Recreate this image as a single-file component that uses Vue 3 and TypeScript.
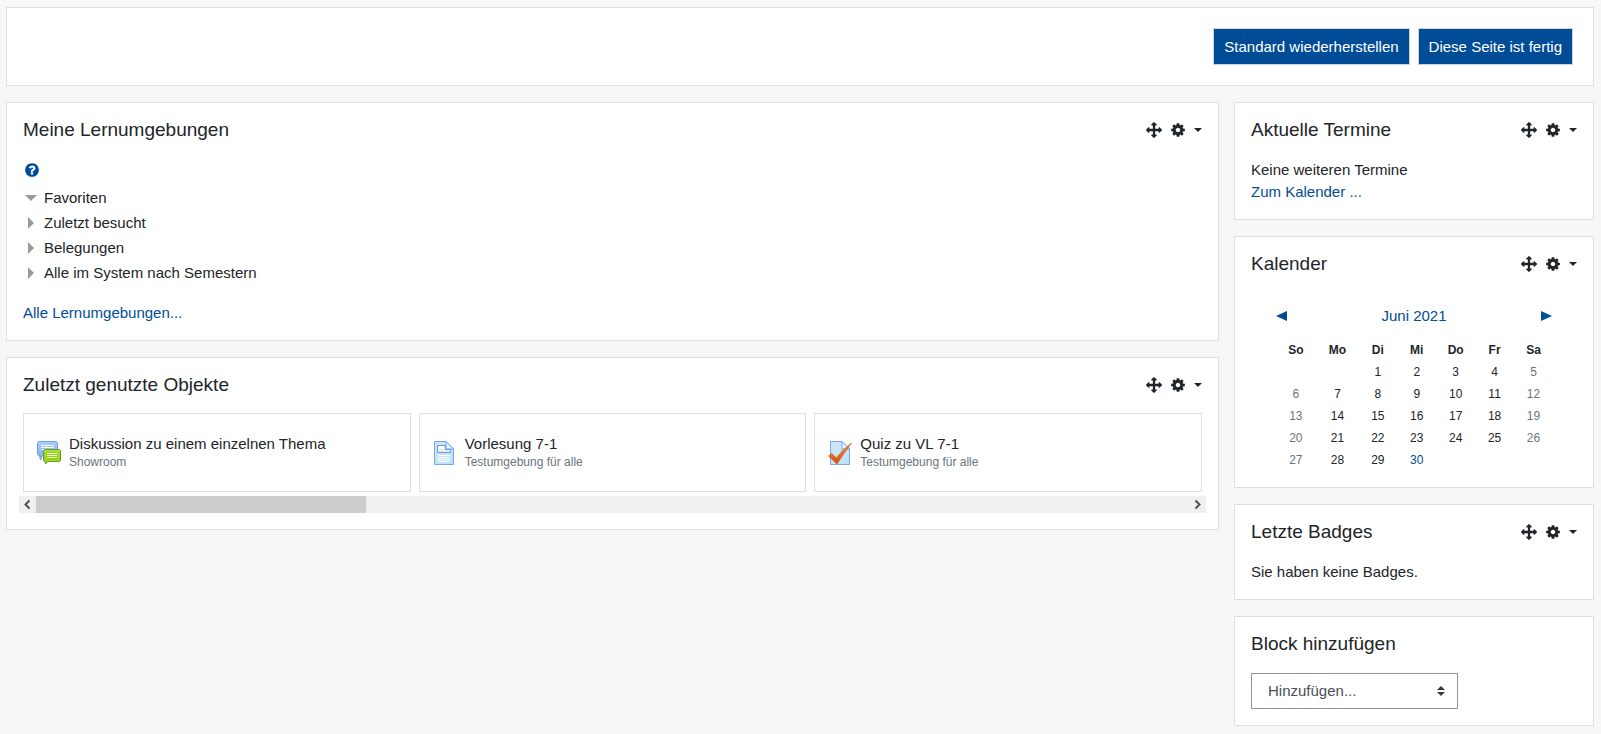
<script setup lang="ts">
import { ref } from 'vue'

interface RecentItem {
  kind: 'forum' | 'page' | 'quiz'
  title: string
  course: string
}

const sections = ref([
  { label: 'Favoriten', open: true },
  { label: 'Zuletzt besucht', open: false },
  { label: 'Belegungen', open: false },
  { label: 'Alle im System nach Semestern', open: false },
])

const recentItems: RecentItem[] = [
  { kind: 'forum', title: 'Diskussion zu einem einzelnen Thema', course: 'Showroom' },
  { kind: 'page', title: 'Vorlesung 7-1', course: 'Testumgebung für alle' },
  { kind: 'quiz', title: 'Quiz zu VL 7-1', course: 'Testumgebung für alle' },
]

const weekdays = ['So', 'Mo', 'Di', 'Mi', 'Do', 'Fr', 'Sa']
const firstWeekday = 2
const today = 30
const weeks: (number | null)[][] = Array.from({ length: 5 }, (_, w) =>
  Array.from({ length: 7 }, (_, d) => {
    const day = w * 7 + d - firstWeekday + 1
    return day >= 1 && day <= 30 ? day : null
  }),
)

const blockToAdd = ref('')
</script>

<template>
  <svg class="sprite" aria-hidden="true">
    <symbol id="i-move" viewBox="0 0 1792 1792">
      <path d="M1792 896q0 26-19 45l-256 256q-19 19-45 19t-45-19-19-45v-128h-384v384h128q26 0 45 19t19 45-19 45l-256 256q-19 19-45 19t-45-19l-256-256q-19-19-19-45t19-45 45-19h128v-384h-384v128q0 26-19 45t-45 19-45-19l-256-256q-19-19-19-45t19-45l256-256q19-19 45-19t45 19 19 45v128h384v-384h-128q-26 0-45-19t-19-45 19-45l256-256q19-19 45-19t45 19l256 256q19 19 19 45t-19 45-45 19h-128v384h384v-128q0-26 19-45t45-19 45 19l256 256q19 19 19 45z" />
    </symbol>
    <symbol id="i-cog" viewBox="0 0 1792 1792">
      <path d="M1152 896q0-106-75-181t-181-75-181 75-75 181 75 181 181 75 181-75 75-181zm512-109v222q0 12-8 23t-20 13l-185 28q-19 54-39 91 35 50 107 138 10 12 10 25t-9 23q-27 37-99 108t-94 71q-12 0-26-9l-138-108q-44 23-91 38-16 136-29 186-7 28-36 28h-222q-14 0-24.5-8.5t-11.5-21.5l-28-184q-49-16-90-37l-141 107q-10 9-25 9-14 0-25-11-126-114-165-168-7-10-7-23 0-12 8-23 15-21 51-66.5t54-70.5q-27-50-41-99l-183-27q-13-2-21-12.5t-8-23.5v-222q0-12 8-23t19-13l186-28q14-46 39-92-40-57-107-138-10-12-10-24 0-10 9-23 26-36 98.5-107.5t94.5-71.5q13 0 26 10l138 107q44-23 91-38 16-136 29-186 7-28 36-28h222q14 0 24.5 8.5t11.5 21.5l28 184q49 16 90 37l142-107q9-9 24-9 13 0 25 10 129 119 165 170 7 8 7 22 0 12-8 23-15 21-51 66.5t-54 70.5q26 50 41 98l183 28q13 2 21 12.5t8 23.5z" />
    </symbol>
    <symbol id="i-caret" viewBox="0 0 8 4">
      <path d="M0 0h8l-4 4z" />
    </symbol>
    <symbol id="i-help" viewBox="0 0 1792 1792">
      <path d="M1024 1376v-192q0-14-9-23t-23-9h-192q-14 0-23 9t-9 23v192q0 14 9 23t23 9h192q14 0 23-9t9-23zm256-672q0-88-55.5-163t-138.5-116-170-41q-243 0-371 213-15 24 8 42l132 100q7 6 19 6 16 0 25-12 53-68 86-92 34-24 86-24 48 0 85.5 26t37.5 59q0 38-20 61t-68 45q-63 28-115.5 86.5t-52.5 125.5v36q0 14 9 23t23 9h192q14 0 23-9t9-23q0-19 21.5-49.5t54.5-49.5q32-18 49-28.5t46-35 44.5-48 28-60.5 12.5-81zm384 192q0 209-103 385.5t-279.5 279.5-385.5 103-385.5-103-279.5-279.5-103-385.5 103-385.5 279.5-279.5 385.5-103 385.5 103 279.5 279.5 103 385.5z" />
    </symbol>
    <linearGradient id="g-blue" x1="0" y1="0" x2="0" y2="1">
      <stop offset="0" stop-color="#a9cdfb" />
      <stop offset="1" stop-color="#7aa9f0" />
    </linearGradient>
    <linearGradient id="g-green" x1="0" y1="0" x2="0" y2="1">
      <stop offset="0" stop-color="#a6dc1c" />
      <stop offset="1" stop-color="#86c408" />
    </linearGradient>
    <linearGradient id="g-paper" x1="0" y1="0" x2="1" y2="1">
      <stop offset="0" stop-color="#cfe8fa" />
      <stop offset="1" stop-color="#bcdff8" />
    </linearGradient>
    <linearGradient id="g-check" x1="0" y1="0" x2="0" y2="1">
      <stop offset="0" stop-color="#f59a3c" />
      <stop offset="1" stop-color="#d9480a" />
    </linearGradient>
    <symbol id="i-forum" viewBox="0 0 24 24">
      <path d="M1.500.5h18l1 1v12l-1 1H5.500L3.500 19l-1-4.500H1.500l-1-1v-12z" fill="url(#g-blue)" stroke="#6f9eea" />
      <path d="M4 4.500h13M4 6.500h13M4 8.500h9" stroke="#fff" />
      <path d="M7.500 8.500h15l1 1v10l-1 1h-12.500l-1.500 2.500-.5-2.500h-.5l-1-1v-10z" fill="url(#g-green)" stroke="#62a024" />
      <path d="M8.500 9.500h13v10h-13z" fill="none" stroke="#bde55a" stroke-opacity=".6" />
      <path d="M10 12.500h10M10 14.500h10M10 16.500h10" stroke="#f4fbd8" />
    </symbol>
    <symbol id="i-page" viewBox="0 0 24 24">
      <path d="M1.500.5h11.500l7.500 7.500v15.500h-19z" fill="url(#g-paper)" stroke="#79a7ef" />
      <path d="M13 .5v7.500h7.500z" fill="#e8f4fd" stroke="#79a7ef" />
      <path d="M4.500 4.500h8v4h5v3h-13z" fill="#dff0fb" stroke="#6a98e4" />
      <path d="M5 10h6v1h-6z" fill="#f3e9b9" />
      <path d="M5 5h6v3h-6z" fill="#fff" />
      <path d="M5 14.500h12M5 16.500h12M5 18.500h12M5 20.500h12" stroke="#fff" />
    </symbol>
    <symbol id="i-quiz" viewBox="0 0 24 24">
      <path d="M2.500.5h11.500l7.500 7.500v15.500h-19z" fill="url(#g-paper)" stroke="#79a7ef" />
      <path d="M14 .5v7.500h7.500z" fill="#e8f4fd" stroke="#79a7ef" />
      <path d="M.5 15l3-2.500 5 4.500Q14 9 23.500 2 16 12 9 23z" fill="url(#g-check)" stroke="#d4500f" stroke-width=".6" />
    </symbol>
  </svg>

  <div class="page">
    <header class="card toolbar">
      <button type="button" class="btn">Standard wiederherstellen</button>
      <button type="button" class="btn">Diese Seite ist fertig</button>
    </header>

    <div class="columns">
      <main class="column">
        <section class="card">
          <div class="card-head">
            <h2>Meine Lernumgebungen</h2>
            <div class="tools">
              <button type="button" aria-label="Block verschieben"><svg class="glyph"><use href="#i-move" /></svg></button>
              <button type="button" class="menu" aria-label="Aktionen"><svg class="glyph"><use href="#i-cog" /></svg><svg class="caret"><use href="#i-caret" /></svg></button>
            </div>
          </div>
          <button type="button" class="help" aria-label="Hilfe"><svg class="glyph"><use href="#i-help" /></svg></button>
          <ul class="tree">
            <li v-for="s in sections" :key="s.label">
              <button type="button" :aria-expanded="s.open" @click="s.open = !s.open">
                <svg class="twist" viewBox="0 0 12 12">
                  <path v-if="s.open" d="M0 3h12l-6 6z" />
                  <path v-else d="M3 0l6 6-6 6z" />
                </svg>
                {{ s.label }}
              </button>
            </li>
          </ul>
          <a href="#">Alle Lernumgebungen...</a>
        </section>

        <section class="card">
          <div class="card-head compact">
            <h2>Zuletzt genutzte Objekte</h2>
            <div class="tools">
              <button type="button" aria-label="Block verschieben"><svg class="glyph"><use href="#i-move" /></svg></button>
              <button type="button" class="menu" aria-label="Aktionen"><svg class="glyph"><use href="#i-cog" /></svg><svg class="caret"><use href="#i-caret" /></svg></button>
            </div>
          </div>
          <div class="items">
            <a v-for="item in recentItems" :key="item.title" href="#" class="item">
              <svg class="item-icon"><use :href="'#i-' + item.kind" /></svg>
              <span class="item-text">
                <span class="item-title">{{ item.title }}</span>
                <span class="item-course">{{ item.course }}</span>
              </span>
            </a>
          </div>
          <div class="scroll">
            <button type="button" aria-label="Nach links"><svg viewBox="0 0 17 17"><path d="M10.500 4.500l-4 4 4 4" /></svg></button>
            <div class="track"><div class="thumb"></div></div>
            <button type="button" aria-label="Nach rechts"><svg viewBox="0 0 17 17"><path d="M6.500 4.500l4 4-4 4" /></svg></button>
          </div>
        </section>
      </main>

      <aside class="column">
        <section class="card">
          <div class="card-head">
            <h2>Aktuelle Termine</h2>
            <div class="tools">
              <button type="button" aria-label="Block verschieben"><svg class="glyph"><use href="#i-move" /></svg></button>
              <button type="button" class="menu" aria-label="Aktionen"><svg class="glyph"><use href="#i-cog" /></svg><svg class="caret"><use href="#i-caret" /></svg></button>
            </div>
          </div>
          <p>Keine weiteren Termine</p>
          <a href="#">Zum Kalender ...</a>
        </section>

        <section class="card">
          <div class="card-head">
            <h2>Kalender</h2>
            <div class="tools">
              <button type="button" aria-label="Block verschieben"><svg class="glyph"><use href="#i-move" /></svg></button>
              <button type="button" class="menu" aria-label="Aktionen"><svg class="glyph"><use href="#i-cog" /></svg><svg class="caret"><use href="#i-caret" /></svg></button>
            </div>
          </div>
          <div class="calendar">
            <div class="month">
              <a href="#" aria-label="Vorheriger Monat"><svg class="arrow" viewBox="0 0 11 10"><path d="M11 0v10l-11-5z" /></svg></a>
              <a href="#">Juni 2021</a>
              <a href="#" aria-label="Nächster Monat"><svg class="arrow" viewBox="0 0 11 10"><path d="M0 0v10l11-5z" /></svg></a>
            </div>
            <table aria-label="Juni 2021">
              <colgroup>
                <col class="col-wide" span="2">
                <col span="5">
              </colgroup>
              <thead>
                <tr><th v-for="d in weekdays" :key="d" scope="col">{{ d }}</th></tr>
              </thead>
              <tbody>
                <tr v-for="(week, w) in weeks" :key="w">
                  <td v-for="(day, d) in week" :key="d" :class="{ weekend: d === 0 || d === 6, today: day === today }">{{ day }}</td>
                </tr>
              </tbody>
            </table>
          </div>
        </section>

        <section class="card">
          <div class="card-head">
            <h2>Letzte Badges</h2>
            <div class="tools">
              <button type="button" aria-label="Block verschieben"><svg class="glyph"><use href="#i-move" /></svg></button>
              <button type="button" class="menu" aria-label="Aktionen"><svg class="glyph"><use href="#i-cog" /></svg><svg class="caret"><use href="#i-caret" /></svg></button>
            </div>
          </div>
          <p>Sie haben keine Badges.</p>
        </section>

        <section class="card">
          <div class="card-head">
            <h2><label for="add-block">Block hinzufügen</label></h2>
          </div>
          <div class="select">
            <select id="add-block" v-model="blockToAdd">
              <option value="">Hinzufügen...</option>
            </select>
            <svg viewBox="0 0 8 10"><path d="M0 4l4-4 4 4zM0 6h8l-4 4z" /></svg>
          </div>
        </section>
      </aside>
    </div>
  </div>
</template>

<style>
body {
  background: #f7f7f7;
}
</style>

<style scoped>
.sprite {
  position: absolute;
  width: 0;
  height: 0;
}
.page {
  padding: 7px 7px 8px 6px;
  font: 15px/22px "Liberation Sans", Arial, sans-serif;
  color: #212529;
}
.page *,
.page {
  box-sizing: border-box;
}
.card {
  background: #fff;
  border: 1px solid #dfdfdf;
  padding: 16px;
}
.toolbar {
  display: flex;
  flex-wrap: wrap;
  justify-content: flex-end;
  gap: 8px;
  padding: 20px;
}
button {
  margin: 0;
  padding: 0;
  border: 0;
  background: none;
  color: inherit;
  font: inherit;
  cursor: pointer;
}
.btn {
  height: 37px;
  padding: 0 10px;
  border: 1px solid #ced4da;
  background: #004c97;
  color: #fff;
}
.columns {
  display: grid;
  grid-template-columns: minmax(0, 1fr) 360px;
  align-items: start;
  gap: 15px;
  margin-top: 16px;
}
.column {
  display: flex;
  flex-direction: column;
  gap: 16px;
}
.card-head {
  display: flex;
  align-items: center;
  justify-content: space-between;
  margin-bottom: 18px;
}
.card-head.compact {
  margin-bottom: 17px;
}
h2 {
  margin: 0;
  font-size: 19px;
  line-height: 22px;
  font-weight: 400;
}
p {
  margin: 0;
}
a {
  color: #004c97;
  text-decoration: none;
}
.tools {
  display: flex;
  gap: 8px;
}
.tools button,
.help {
  display: flex;
  align-items: center;
}
.menu {
  gap: 8px;
}
.glyph {
  width: 16px;
  height: 16px;
  fill: currentColor;
}
.caret {
  width: 8px;
  height: 4px;
  fill: currentColor;
}
.help {
  height: 22px;
  padding: 0 1px;
  color: #004c97;
}
.tree {
  margin: 4px 0 17px;
  padding: 0;
  list-style: none;
}
.tree button {
  display: flex;
  align-items: center;
  gap: 7px;
  height: 25px;
  padding-left: 2px;
}
.twist {
  width: 12px;
  height: 12px;
  fill: #999;
}
.items {
  display: grid;
  grid-template-columns: repeat(3, minmax(0, 1fr));
  gap: 8px;
}
.item {
  display: flex;
  align-items: center;
  gap: 8px;
  height: 79px;
  padding: 0 13px;
  border: 1px solid #dfdfdf;
  color: #212529;
}
.item-icon {
  flex: none;
  width: 24px;
  height: 24px;
}
.item-text {
  display: flex;
  flex-direction: column;
  line-height: 18px;
}
.item-course {
  color: #6c757d;
  font-size: 12px;
}
.scroll {
  display: flex;
  height: 17px;
  margin: 4px -4px 0;
  background: #f0f0f0;
}
.scroll svg {
  display: block;
  width: 17px;
  height: 17px;
  fill: none;
  stroke: #505050;
  stroke-width: 2;
}
.track {
  flex: 1;
}
.thumb {
  width: 28.6%;
  height: 100%;
  background: #cdcdcd;
}
.calendar {
  padding: 0 24px;
}
.month {
  display: flex;
  align-items: center;
  justify-content: space-between;
  height: 46px;
  padding: 0 1px;
}
.arrow {
  display: block;
  width: 11px;
  height: 10px;
  fill: #004c97;
}
table {
  width: 100%;
  table-layout: fixed;
  border-collapse: collapse;
  font-size: 12px;
}
.col-wide {
  width: 15%;
}
th,
td {
  height: 22px;
  padding: 0;
  text-align: center;
}
.weekend {
  color: #6c757d;
}
.today {
  color: #004c97;
}
.select {
  position: relative;
  width: 207px;
}
.select select {
  display: block;
  width: 100%;
  height: 36px;
  padding: 0 32px 0 16px;
  appearance: none;
  border: 1px solid #8f959e;
  border-radius: 0;
  background: #fff;
  color: #495057;
  font: inherit;
}
.select svg {
  position: absolute;
  top: 13px;
  right: 13px;
  width: 8px;
  height: 10px;
  fill: #343a40;
  pointer-events: none;
}
</style>
